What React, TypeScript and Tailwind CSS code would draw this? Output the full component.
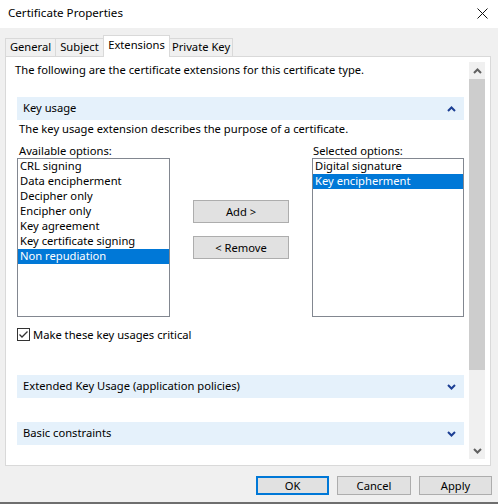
import React from "react";

const Chevron = ({ up = false, color = "#1c3f94" }: { up?: boolean; color?: string }) => (
  <svg width="9" height="6" viewBox="0 0 9 6" className="block">
    <path
      d={up ? "M1 5 L4.5 1.5 L8 5" : "M1 1 L4.5 4.5 L8 1"}
      fill="none"
      stroke={color}
      strokeWidth="2"
    />
  </svg>
);

const SectionHeader = ({ title, up = false }: { title: string; up?: boolean }) => (
  <div className="flex h-[23px] w-[447px] items-center justify-between bg-[#e5f1fb] pl-[6px] pr-[8px]">
    <span>{title}</span>
    <Chevron up={up} />
  </div>
);

const ListBox = ({
  items,
  selected,
  width,
}: {
  items: string[];
  selected: string;
  width: string;
}) => (
  <div className={`h-[159px] ${width} border border-[#828790] bg-white`}>
    {items.map((item) => (
      <div
        key={item}
        className={`h-[15px] whitespace-nowrap pl-[2px] leading-[14px] ${
          item === selected ? "bg-[#0078d7] text-white" : "text-black"
        }`}
      >
        {item}
      </div>
    ))}
  </div>
);

const App = () => {
  const tabs = [
    { label: "General", w: "w-[51px]" },
    { label: "Subject", w: "w-[49px]" },
    { label: "Extensions", w: "w-[67px]" },
    { label: "Private Key", w: "w-[64px]" },
  ];

  return (
    <div className="flex h-[504px] w-[498px] flex-col overflow-hidden bg-white font-['Noto_Sans',sans-serif] text-[11.2px] text-black">
      {/* title bar */}
      <div className="flex h-[28px] shrink-0 items-center justify-between bg-white pb-[2px] pl-[8px] pr-[10px]">
        <span className="text-[11.6px]">Certificate Properties</span>
        <svg width="11" height="11" viewBox="0 0 11 11">
          <path d="M0.5 0.5 L10.5 10.5 M10.5 0.5 L0.5 10.5" stroke="#111" strokeWidth="1" />
        </svg>
      </div>

      <div className="flex flex-1 flex-col border-b-2 border-[#6e6e6e] bg-[#f0f0f0] pt-[7px]">
        {/* tabs */}
        <div className="flex h-[21px] items-end pl-[5px]">
          {tabs.map((t) =>
            t.label === "Extensions" ? (
              <div
                key={t.label}
                className={`relative z-10 -mb-px -ml-px flex h-[22px] ${t.w} items-center justify-center whitespace-nowrap border border-b-0 border-[#d9d9d9] bg-white pb-[3px]`}
              >
                {t.label}
              </div>
            ) : (
              <div
                key={t.label}
                className={`-ml-px flex h-[18px] first:ml-0 ${t.w} items-center justify-center whitespace-nowrap border border-b-0 border-[#d9d9d9] bg-[#f0f0f0] pb-[1px]`}
              >
                {t.label}
              </div>
            )
          )}
        </div>

        {/* panel */}
        <div className="ml-[5px] flex h-[410px] w-[486px] border border-[#d9d9d9] bg-white pb-[6px] pl-[5px] pr-[5px] pt-[5px]">
          <div className="flex flex-1 flex-col overflow-hidden">
            <div className="pl-[4px] leading-[15px]">
              The following are the certificate extensions for this certificate type.
            </div>

            <div className="ml-[6px] mt-[20px] flex flex-col">
              <SectionHeader title="Key usage" up />
              <div className="mt-[1px] pl-[2px] leading-[15px]">
                The key usage extension describes the purpose of a certificate.
              </div>

              <div className="mt-[8px] flex">
                <div className="flex flex-col">
                  <div className="pl-[2px] leading-[14px]">Available options:</div>
                  <ListBox
                    width="w-[153px]"
                    selected="Non repudiation"
                    items={[
                      "CRL signing",
                      "Data encipherment",
                      "Decipher only",
                      "Encipher only",
                      "Key agreement",
                      "Key certificate signing",
                      "Non repudiation",
                    ]}
                  />
                </div>

                <div className="ml-[23px] flex flex-col gap-[13px] pt-[56px]">
                  <button className="h-[23px] w-[96px] border border-[#adadad] bg-[#e1e1e1] leading-none">
                    Add &gt;
                  </button>
                  <button className="h-[23px] w-[96px] border border-[#adadad] bg-[#e1e1e1] leading-none">
                    &lt; Remove
                  </button>
                </div>

                <div className="ml-[23px] flex flex-col">
                  <div className="pl-[1px] leading-[14px]">Selected options:</div>
                  <ListBox
                    width="w-[152px]"
                    selected="Key encipherment"
                    items={["Digital signature", "Key encipherment"]}
                  />
                </div>
              </div>

              <div className="mt-[11px] flex items-center gap-[3px]">
                <svg width="13" height="13" viewBox="0 0 13 13" className="block">
                  <rect x="0.5" y="0.5" width="12" height="12" fill="#fff" stroke="#333" />
                  <path d="M2.5 6.5 L5 9 L10.5 3.5" fill="none" stroke="#333" strokeWidth="1.3" />
                </svg>
                <span className="leading-[12px]">Make these key usages critical</span>
              </div>

              <div className="mt-[34px]">
                <SectionHeader title="Extended Key Usage (application policies)" />
              </div>
              <div className="mt-[24px]">
                <SectionHeader title="Basic constraints" />
              </div>
            </div>
          </div>

          {/* scrollbar */}
          <div className="flex w-[16px] flex-col bg-[#f0f0f0]">
            <div className="flex h-[17px] items-center justify-center">
              <Chevron up color="#606060" />
            </div>
            <div className="h-[291px] bg-[#cdcdcd]" />
            <div className="flex-1" />
            <div className="flex h-[17px] items-center justify-center">
              <Chevron color="#606060" />
            </div>
          </div>
        </div>

        {/* dialog buttons */}
        <div className="mt-[10px] flex justify-end gap-[8px] pr-[6px]">
          <button className="h-[19px] w-[73px] border-2 border-[#0078d7] bg-[#e1e1e1] leading-none">
            OK
          </button>
          <button className="h-[19px] w-[74px] border border-[#adadad] bg-[#e1e1e1] leading-none">
            Cancel
          </button>
          <button className="h-[19px] w-[73px] border border-[#adadad] bg-[#e1e1e1] leading-none">
            Apply
          </button>
        </div>
      </div>
    </div>
  );
};

export default App;
